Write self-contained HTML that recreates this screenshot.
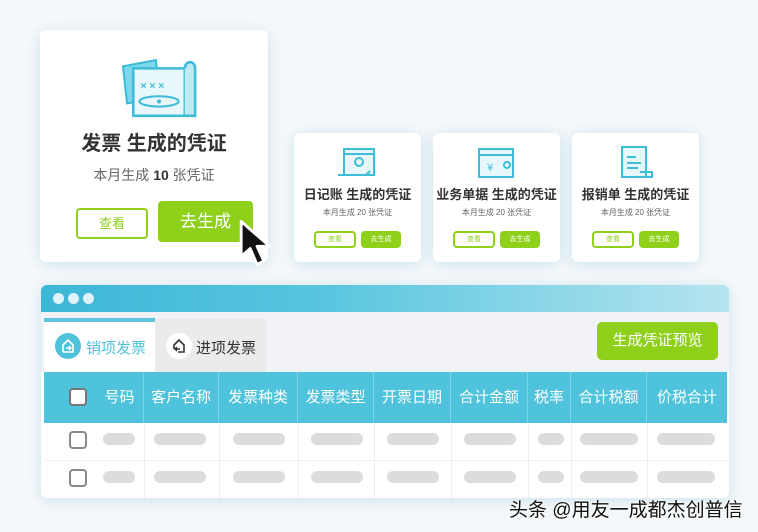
<!DOCTYPE html>
<html><head><meta charset="utf-8"><style>
*{margin:0;padding:0;box-sizing:border-box}
body{width:758px;height:532px;background:#f5f8fa;font-family:"Liberation Sans","Noto Sans CJK SC",sans-serif;position:relative;overflow:hidden}
.card{position:absolute;background:#fff;border-radius:6px;box-shadow:0 2px 14px rgba(120,190,215,.35);text-align:center}
.ab{position:absolute}
.bo{position:absolute;border:2px solid #8fd01a;border-radius:4px;color:#8fd01a;background:#fff;text-align:center}
.bg{position:absolute;background:#8fd01a;border-radius:4px;color:#fff;text-align:center}
.t{position:absolute;left:0;right:0;color:#333;font-weight:bold}
.s{position:absolute;left:0;right:0;color:#666}
.th{position:absolute;top:372px;height:51px;line-height:51px;color:#fff;font-size:15px;text-align:center;border-right:1px solid #7fd3e5}
.pill{position:absolute;height:12px;border-radius:6px;background:#dcdcdf}
.cb{position:absolute;width:18px;height:18px;border:2px solid #888;border-radius:4px;background:#fff}
.vl{position:absolute;top:423px;height:75px;width:1px;background:#eee}
</style></head><body>

<div class="card" style="left:40px;top:30px;width:228px;height:232px">
<svg class="ab" style="left:76px;top:26px" width="84" height="66" viewBox="0 0 80 64">
<path d="M6 10 L38 4 L42 40 L10 46 Z" fill="#7dd7ec" stroke="#3fbcd8" stroke-width="2"/>
<path d="M16 12 H66 V58 H16 Z" fill="#e8f7fb" stroke="#3fbcd8" stroke-width="2.5"/>
<path d="M66 12 C66 4 76 4 76 12 V58 H66" fill="#bfeaf4" stroke="#3fbcd8" stroke-width="2.5"/>
<text x="23" y="32" font-size="10" fill="#3fbcd8" font-weight="bold">× × ×</text>
<ellipse cx="41" cy="44" rx="19" ry="5" fill="none" stroke="#3fbcd8" stroke-width="2"/>
<circle cx="41" cy="44" r="2" fill="#3fbcd8"/>
</svg>
<div class="t" style="top:97px;font-size:20px">发票 生成的凭证</div>
<div class="s" style="top:135px;font-size:14px">本月生成 <b style="color:#333">10</b> 张凭证</div>
<div class="bo" style="left:36px;top:178px;width:72px;height:31px;line-height:27px;font-size:13px">查看</div>
<div class="bg" style="left:118px;top:171px;width:95px;height:41px;line-height:41px;font-size:17px">去生成</div>
</div>
<svg class="ab" style="left:236px;top:218px" width="42" height="52" viewBox="0 0 36 46"><path d="M4 3 L4 34 L12 27 L18 41 L24 38 L18 25 L29 25 Z" fill="#111" stroke="#fff" stroke-width="2.5" stroke-linejoin="round"/></svg>

<div class="card" style="left:294px;top:133px;width:127px;height:129px">
<svg class="ab" style="left:42px;top:12px" width="44" height="36" viewBox="0 0 44 36"><rect x="8" y="4" width="30" height="26" fill="#e8f7fb" stroke="#3fbcd8" stroke-width="2"/><path d="M8 9H38" stroke="#3fbcd8" stroke-width="2"/><circle cx="23" cy="17" r="4" fill="none" stroke="#3fbcd8" stroke-width="2"/><path d="M2 30 H30 L34 26" fill="none" stroke="#3fbcd8" stroke-width="2"/></svg>
<div class="t" style="top:51px;font-size:13px">日记账 生成的凭证</div>
<div class="s" style="top:74px;font-size:8px">本月生成 20 张凭证</div>
<div class="bo" style="left:20px;top:98px;width:42px;height:17px;line-height:13px;font-size:7px">查看</div>
<div class="bg" style="left:67px;top:98px;width:40px;height:17px;line-height:17px;font-size:7px">去生成</div>
</div>
<div class="card" style="left:433px;top:133px;width:127px;height:129px">
<svg class="ab" style="left:42px;top:14px" width="44" height="34" viewBox="0 0 44 34"><rect x="4" y="2" width="34" height="28" fill="#e8f7fb" stroke="#3fbcd8" stroke-width="2"/><path d="M4 8H38" stroke="#3fbcd8" stroke-width="2"/><text x="12" y="24" font-size="11" fill="#3fbcd8">¥</text><circle cx="32" cy="18" r="3" fill="none" stroke="#3fbcd8" stroke-width="2"/></svg>
<div class="t" style="top:51px;font-size:13px">业务单据 生成的凭证</div>
<div class="s" style="top:74px;font-size:8px">本月生成 20 张凭证</div>
<div class="bo" style="left:20px;top:98px;width:42px;height:17px;line-height:13px;font-size:7px">查看</div>
<div class="bg" style="left:67px;top:98px;width:40px;height:17px;line-height:17px;font-size:7px">去生成</div>
</div>
<div class="card" style="left:572px;top:133px;width:127px;height:129px">
<svg class="ab" style="left:42px;top:12px" width="44" height="38" viewBox="0 0 44 38"><rect x="8" y="2" width="24" height="30" fill="#e8f7fb" stroke="#3fbcd8" stroke-width="2"/><path d="M13 12H22M13 18H27M13 23H24" stroke="#3fbcd8" stroke-width="2"/><path d="M20 32 H38 V27 H26" fill="none" stroke="#3fbcd8" stroke-width="2"/></svg>
<div class="t" style="top:51px;font-size:13px">报销单 生成的凭证</div>
<div class="s" style="top:74px;font-size:8px">本月生成 20 张凭证</div>
<div class="bo" style="left:20px;top:98px;width:42px;height:17px;line-height:13px;font-size:7px">查看</div>
<div class="bg" style="left:67px;top:98px;width:40px;height:17px;line-height:17px;font-size:7px">去生成</div>
</div>

<div class="ab" style="left:41px;top:285px;width:688px;height:213px;background:#fff;border-radius:6px;box-shadow:0 2px 14px rgba(120,190,215,.35);overflow:hidden">
<div class="ab" style="left:0;top:0;width:688px;height:27px;background:linear-gradient(90deg,#3db6d6,#57c5df 40%,#b5e4ef)"></div>
<div class="ab" style="left:0;top:27px;width:688px;height:60px;background:#f0f2f5"></div>
</div>
<div class="ab" style="left:53px;top:293px;width:11px;height:11px;border-radius:50%;background:#dff4fa"></div>
<div class="ab" style="left:68px;top:293px;width:11px;height:11px;border-radius:50%;background:#dff4fa"></div>
<div class="ab" style="left:83px;top:293px;width:11px;height:11px;border-radius:50%;background:#dff4fa"></div>
<div class="ab" style="left:44px;top:318px;width:111px;height:54px;background:#fff;border-top:4px solid #5bc6dc"></div>
<div class="ab" style="left:155px;top:319px;width:111px;height:53px;background:#ebebeb"></div>
<div class="ab" style="left:55px;top:333px;width:26px;height:26px;border-radius:50%;background:#4fc3db"></div>
<svg class="ab" style="left:59px;top:337px" width="18" height="18" viewBox="0 0 18 18"><path d="M4 15V8L9 3L14 8V15H4" fill="none" stroke="#fff" stroke-width="1.6"/><path d="M7 11H12M10 9L12 11L10 13" fill="none" stroke="#fff" stroke-width="1.4"/></svg>
<div class="ab" style="left:86px;top:337px;font-size:15px;color:#4fc3db">销项发票</div>
<div class="ab" style="left:166px;top:333px;width:26px;height:26px;border-radius:50%;background:#fff"></div>
<svg class="ab" style="left:170px;top:337px" width="18" height="18" viewBox="0 0 18 18"><path d="M4 12V8L9 3L14 8V15H8" fill="none" stroke="#333" stroke-width="1.6"/><path d="M10 12H5M7 10L5 12L7 14" fill="none" stroke="#333" stroke-width="1.4"/></svg>
<div class="ab" style="left:196px;top:337px;font-size:15px;color:#333">进项发票</div>
<div class="bg" style="left:597px;top:322px;width:121px;height:38px;line-height:38px;font-size:15px;border-radius:5px">生成凭证预览</div>

<div class="ab" style="left:44px;top:372px;width:683px;height:51px;background:#4fc3db"></div>
<div class="cb" style="left:69px;top:388px;border-color:#777"></div>
<div class="th" style="left:96px;width:48px">号码</div>
<div class="th" style="left:144px;width:75px">客户名称</div>
<div class="th" style="left:219px;width:79px">发票种类</div>
<div class="th" style="left:298px;width:76px">发票类型</div>
<div class="th" style="left:374px;width:77px">开票日期</div>
<div class="th" style="left:451px;width:77px">合计金额</div>
<div class="th" style="left:528px;width:43px">税率</div>
<div class="th" style="left:571px;width:76px">合计税额</div>
<div class="th" style="left:647px;width:80px;border:none">价税合计</div>
<div class="ab" style="left:44px;top:460px;width:683px;height:1px;background:#eee"></div>
<div class="vl" style="left:144px"></div><div class="vl" style="left:219px"></div><div class="vl" style="left:298px"></div><div class="vl" style="left:374px"></div><div class="vl" style="left:451px"></div><div class="vl" style="left:528px"></div><div class="vl" style="left:571px"></div><div class="vl" style="left:647px"></div>

<div class="cb" style="left:69px;top:431px"></div><div class="cb" style="left:69px;top:469px"></div>
<div class="pill" style="left:103px;top:433px;width:32px"></div><div class="pill" style="left:103px;top:471px;width:32px"></div>
<div class="pill" style="left:154px;top:433px;width:52px"></div><div class="pill" style="left:154px;top:471px;width:52px"></div>
<div class="pill" style="left:233px;top:433px;width:52px"></div><div class="pill" style="left:233px;top:471px;width:52px"></div>
<div class="pill" style="left:311px;top:433px;width:52px"></div><div class="pill" style="left:311px;top:471px;width:52px"></div>
<div class="pill" style="left:387px;top:433px;width:52px"></div><div class="pill" style="left:387px;top:471px;width:52px"></div>
<div class="pill" style="left:464px;top:433px;width:52px"></div><div class="pill" style="left:464px;top:471px;width:52px"></div>
<div class="pill" style="left:538px;top:433px;width:26px"></div><div class="pill" style="left:538px;top:471px;width:26px"></div>
<div class="pill" style="left:580px;top:433px;width:58px"></div><div class="pill" style="left:580px;top:471px;width:58px"></div>
<div class="pill" style="left:657px;top:433px;width:58px"></div><div class="pill" style="left:657px;top:471px;width:58px"></div>

<div class="ab" style="left:509px;top:495px;font-size:19px;color:#111;text-shadow:0 0 3px #fff,0 0 2px #fff">头条 @用友一成都杰创普信</div>
</body></html>
